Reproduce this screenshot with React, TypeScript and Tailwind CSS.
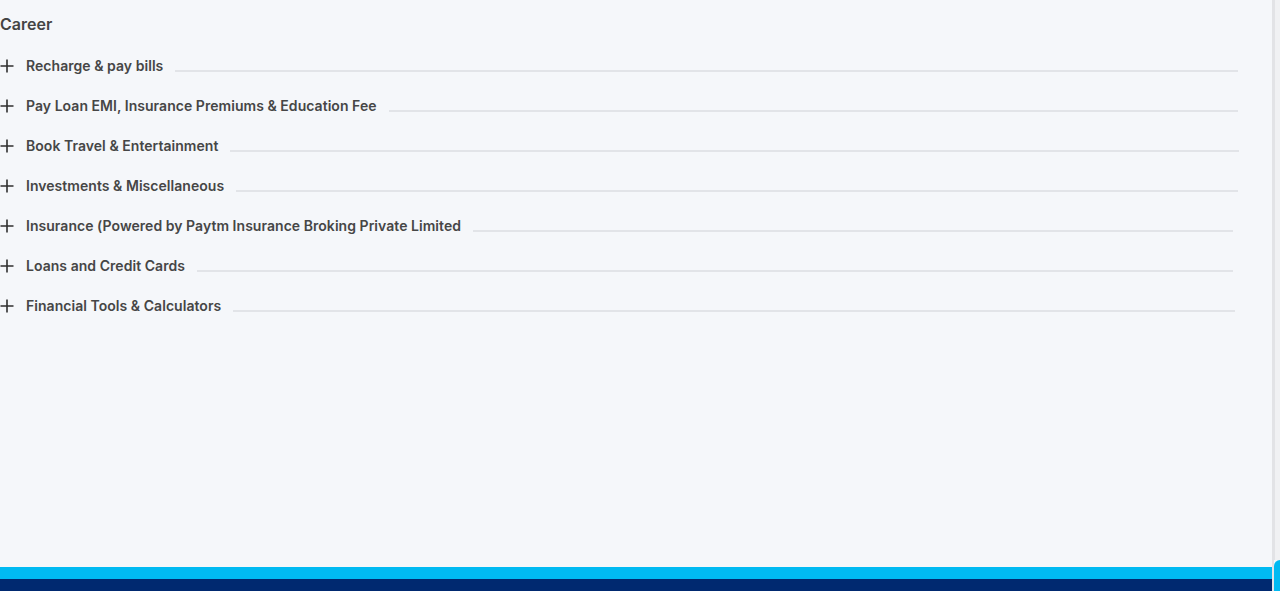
import React from 'react';

const rows: { label: string; end: string }[] = [
  { label: 'Recharge & pay bills', end: 'mr-[34px]' },
  { label: 'Pay Loan EMI, Insurance Premiums & Education Fee', end: 'mr-[34px]' },
  { label: 'Book Travel & Entertainment', end: 'mr-[33px]' },
  { label: 'Investments & Miscellaneous', end: 'mr-[34px]' },
  { label: 'Insurance (Powered by Paytm Insurance Broking Private Limited', end: 'mr-[39px]' },
  { label: 'Loans and Credit Cards', end: 'mr-[39px]' },
  { label: 'Financial Tools & Calculators', end: 'mr-[37px]' },
];

const PlusIcon = () => (
  <svg width="14" height="14" viewBox="0 0 14 14" className="shrink-0">
    <path d="M7 0.5V13.5M0.5 7H13.5" stroke="#2f2f2f" strokeWidth="1.6" />
  </svg>
);

export default function App() {
  return (
    <div className="h-[591px] w-full flex overflow-hidden bg-[#f5f7fa] font-['Inter',_'Liberation_Sans',_sans-serif]">
      <div className="flex-1 flex flex-col">
        <div className="flex-1 pt-3">
          <h3 className="text-base leading-6 font-semibold text-[#444]">Career</h3>
          <ul className="mt-[10px]">
            {rows.map((r) => (
              <li key={r.label} className="h-10 flex items-center">
                <PlusIcon />
                <span className="ml-3 text-sm leading-5 font-semibold tracking-[0.003em] text-[#464646] whitespace-nowrap">
                  {r.label}
                </span>
                <div className={`flex-1 ml-3 mt-[10px] h-[2px] bg-[#e2e4e8] ${r.end}`} />
              </li>
            ))}
          </ul>
        </div>
        <div className="h-[12px] bg-[#00baf2]" />
        <div className="h-[12px] bg-[#002970]" />
      </div>
      <div className="w-2 flex flex-col">
        <div className="flex-1 flex">
          <div className="w-[3px] bg-[#e2e3e6]" />
          <div className="flex-1 bg-[#f0f1f3]" />
        </div>
        <div className="h-[31px] flex">
          <div className="w-[2px] bg-[#e2e3e6]" />
          <div className="flex-1 bg-[#00baf2] rounded-tl-md" />
        </div>
      </div>
    </div>
  );
}
